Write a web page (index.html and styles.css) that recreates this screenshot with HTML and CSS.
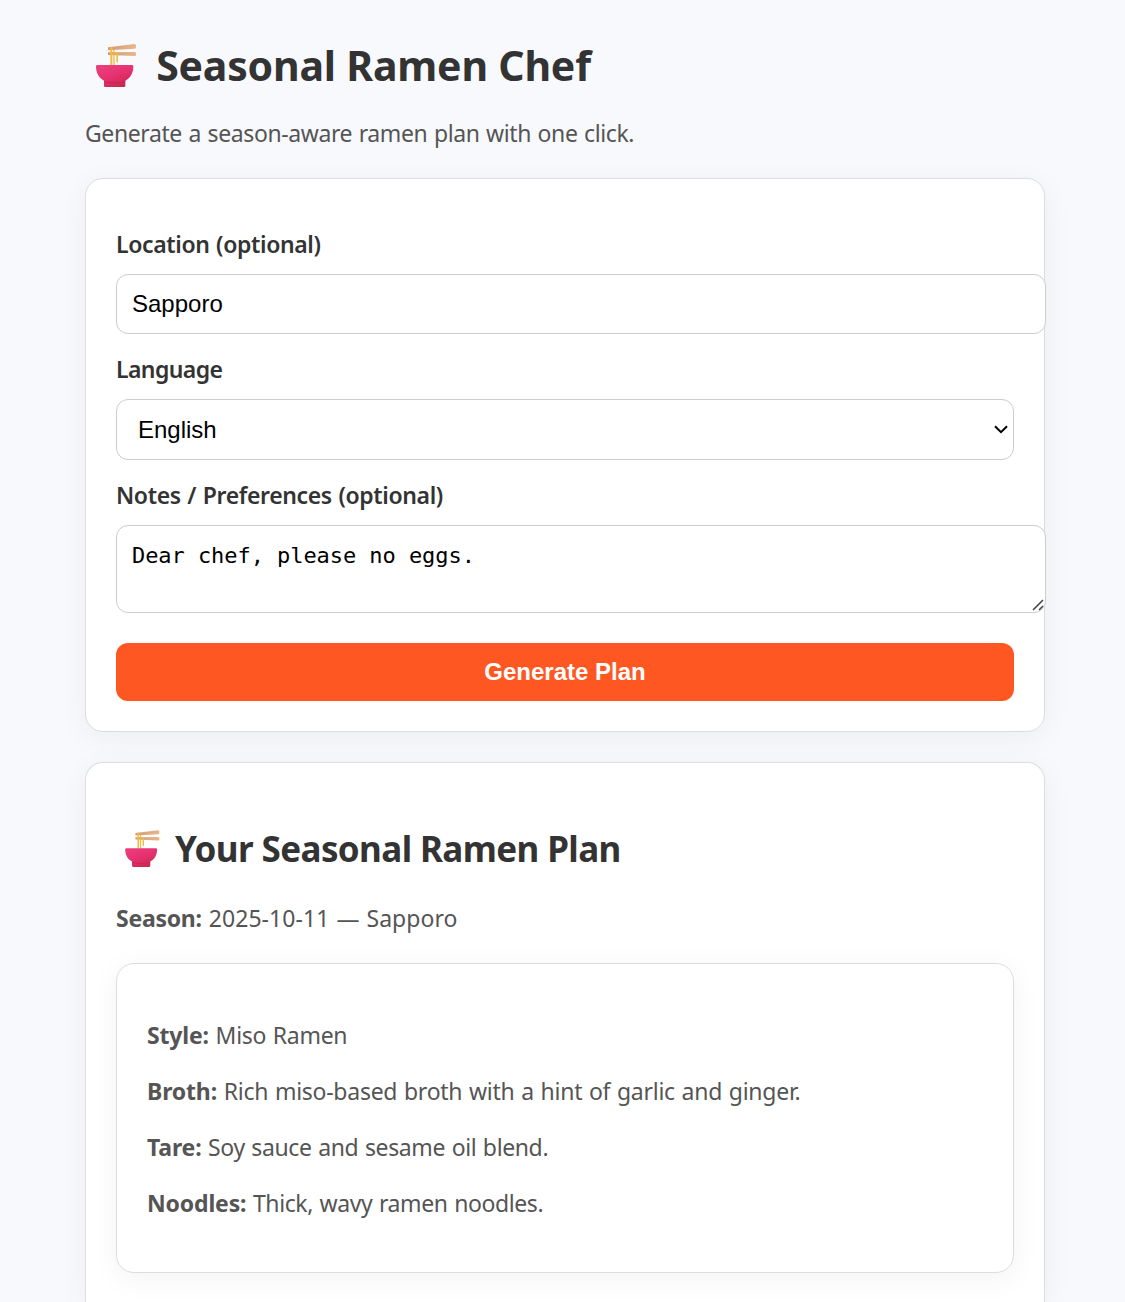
FILE: index.html
```html
<!DOCTYPE html>
<html lang="en">
<head>
<meta charset="utf-8">
<title>Seasonal Ramen Chef</title>
<link rel="stylesheet" href="styles.css">
</head>
<body>
<svg class="defs" width="0" height="0" aria-hidden="true">
  <defs>
    <linearGradient id="bowl-fill" x1="0" y1="0" x2="0.6" y2="1">
      <stop offset="0" stop-color="#ee3f7c"/>
      <stop offset="0.6" stop-color="#e5306f"/>
      <stop offset="1" stop-color="#c8284f"/>
    </linearGradient>
    <linearGradient id="stick-fill" x1="0" y1="0" x2="1" y2="0">
      <stop offset="0" stop-color="#d39a70"/>
      <stop offset="1" stop-color="#e9b78d"/>
    </linearGradient>
    <symbol id="ramen" viewBox="0 0 162 162">
      <path d="M54 28 133 18q5 0 5 5v5q0 4-4 4L54 37z" fill="url(#stick-fill)"/>
      <path d="M54 43 134 42q4 0 4 4v4q0 4-4 4L54 51z" fill="url(#stick-fill)"/>
      <path d="M61 82V29q0-3 3-3t3 3v53M70 82V36h4v46M79 70V42h5v31q-3 3-5-3" fill="#efbd43"/>
      <path d="M18 85q0-4 5-4H125q5 0 5 4c0 20-9 35-24 43v15q0 4-4 4H46q-4 0-4-4V128C27 120 18 105 18 85z" fill="url(#bowl-fill)"/>
      <path d="M42 130q32 6 64 0l-1 3q-31 5-62 0z" fill="#c2264f"/>
    </symbol>
  </defs>
</svg>
<main class="container">
  <h1 class="title"><svg class="ramen"><use href="#ramen"/></svg><span>Seasonal Ramen Chef</span></h1>
  <p class="subtitle">Generate a season-aware ramen plan with one click.</p>

  <form class="card">
    <label class="label" for="location">Location (optional)</label>
    <input class="field" id="location" type="text" value="Sapporo">
    <label class="label label-language" for="language">Language</label>
    <div class="select-wrap">
      <select class="select" id="language"><option>English</option></select>
      <svg class="chevron" viewBox="0 0 14 9"><path d="M1 1.2 7 7.2 13 1.2"/></svg>
    </div>
    <label class="label" for="notes">Notes / Preferences (optional)</label>
    <div class="notes-wrap">
      <textarea class="field notes" id="notes">Dear chef, please no eggs.</textarea>
      <svg class="grip" viewBox="0 0 12 12"><path d="M1 11 11 1M7 11 11 7"/></svg>
    </div>
    <button class="button" type="button">Generate Plan</button>
  </form>

  <section class="card plan">
    <h2 class="plan-title"><svg class="ramen"><use href="#ramen"/></svg><span>Your Seasonal Ramen Plan</span></h2>
    <p class="season"><b>Season:</b> 2025-10-11 — Sapporo</p>
    <div class="card details">
      <p><b>Style:</b> Miso Ramen</p>
      <p class="broth"><b>Broth:</b> Rich miso-based broth with a hint of garlic and ginger.</p>
      <p class="tare"><b>Tare:</b> Soy sauce and sesame oil blend.</p>
      <p class="noodles"><b>Noodles:</b> Thick, wavy ramen noodles.</p>
    </div>
  </section>
</main>
</body>
</html>
```
FILE: styles.css
```css
html, body { height: 1302px; overflow: hidden; }
body {
  margin: 0;
  background: #f8f9fd;
  color: #555;
  font: 23px/32px "Noto Sans", sans-serif;
  letter-spacing: -0.3px;
  word-spacing: 1px;
}
.defs { position: absolute; }
.container { width: 960px; margin-left: 85px; padding-top: 36px; }
h1, h2, p { margin: 0; }
.title, .plan-title { display: flex; color: #333; font-weight: 700; word-spacing: 0; }
.title { height: 56px; font-size: 42px; line-height: 56px; }
.title span { font-size: 41px; line-height: 58px; letter-spacing: -0.2px; }
.plan-title { height: 48px; font-size: 36px; line-height: 48px; margin-top: 30px; }
.plan-title span { font-size: 35px; line-height: 52px; letter-spacing: -0.6px; margin-left: -2px; }
.ramen { width: 1.286em; height: 1.286em; margin: 0.048em 0.29em 0 0.119em; flex: none; }
.subtitle { margin: 25px 0 29px; letter-spacing: -0.4px; }
.card {
  box-sizing: border-box;
  padding: 30px;
  background: #fff;
  border: 1px solid #dcdde0;
  border-radius: 18px;
  box-shadow: 0 6px 30px rgba(0, 0, 0, 0.05);
}
.label { display: block; margin: 19px 0 14px; color: #333; font-weight: 600; letter-spacing: -0.37px; }
.label-language { letter-spacing: -0.58px; }
.field, .select {
  display: block;
  box-sizing: border-box;
  margin: 0;
  border: 1px solid #ccc;
  border-radius: 12px;
  background: #fff;
  color: #000;
  font: 24px "Liberation Sans", Arial, sans-serif;
  outline: none;
}
.field { width: 930px; height: 60px; padding: 0 15px; position: relative; }
.select { width: 100%; height: 61px; padding: 0 21px; appearance: none; }
.select-wrap, .notes-wrap { position: relative; }
.chevron { position: absolute; right: 6px; top: 26px; width: 14px; height: 9px; fill: none; stroke: #000; stroke-width: 2; }
.notes { height: 88px; padding: 16px 15px 14px; resize: none; font: 22px/28px "DejaVu Sans Mono", monospace; letter-spacing: -0.06px; }
.grip { position: absolute; left: 916px; top: 74px; width: 12px; height: 12px; fill: none; stroke: #444; stroke-width: 1.6; }
.button {
  display: block;
  width: 100%;
  height: 58px;
  margin-top: 30px;
  padding: 0;
  border: 0;
  border-radius: 12px;
  background: #ff5722;
  color: #fff;
  font: 700 24px "Liberation Sans", Arial, sans-serif;
}
.plan { margin-top: 30px; padding-bottom: 29px; border-bottom: 0; border-radius: 18px 18px 0 0; }
.season { margin: 31px 0 29px; letter-spacing: 0.05px; }
.season b { letter-spacing: -0.25px; }
.details { padding: 55px 30px 53px; }
.details p + p { margin-top: 24px; }
.details b { letter-spacing: -0.15px; }
.broth { letter-spacing: -0.26px; }
.tare { letter-spacing: -0.38px; }
.noodles { letter-spacing: -0.4px; }
```
